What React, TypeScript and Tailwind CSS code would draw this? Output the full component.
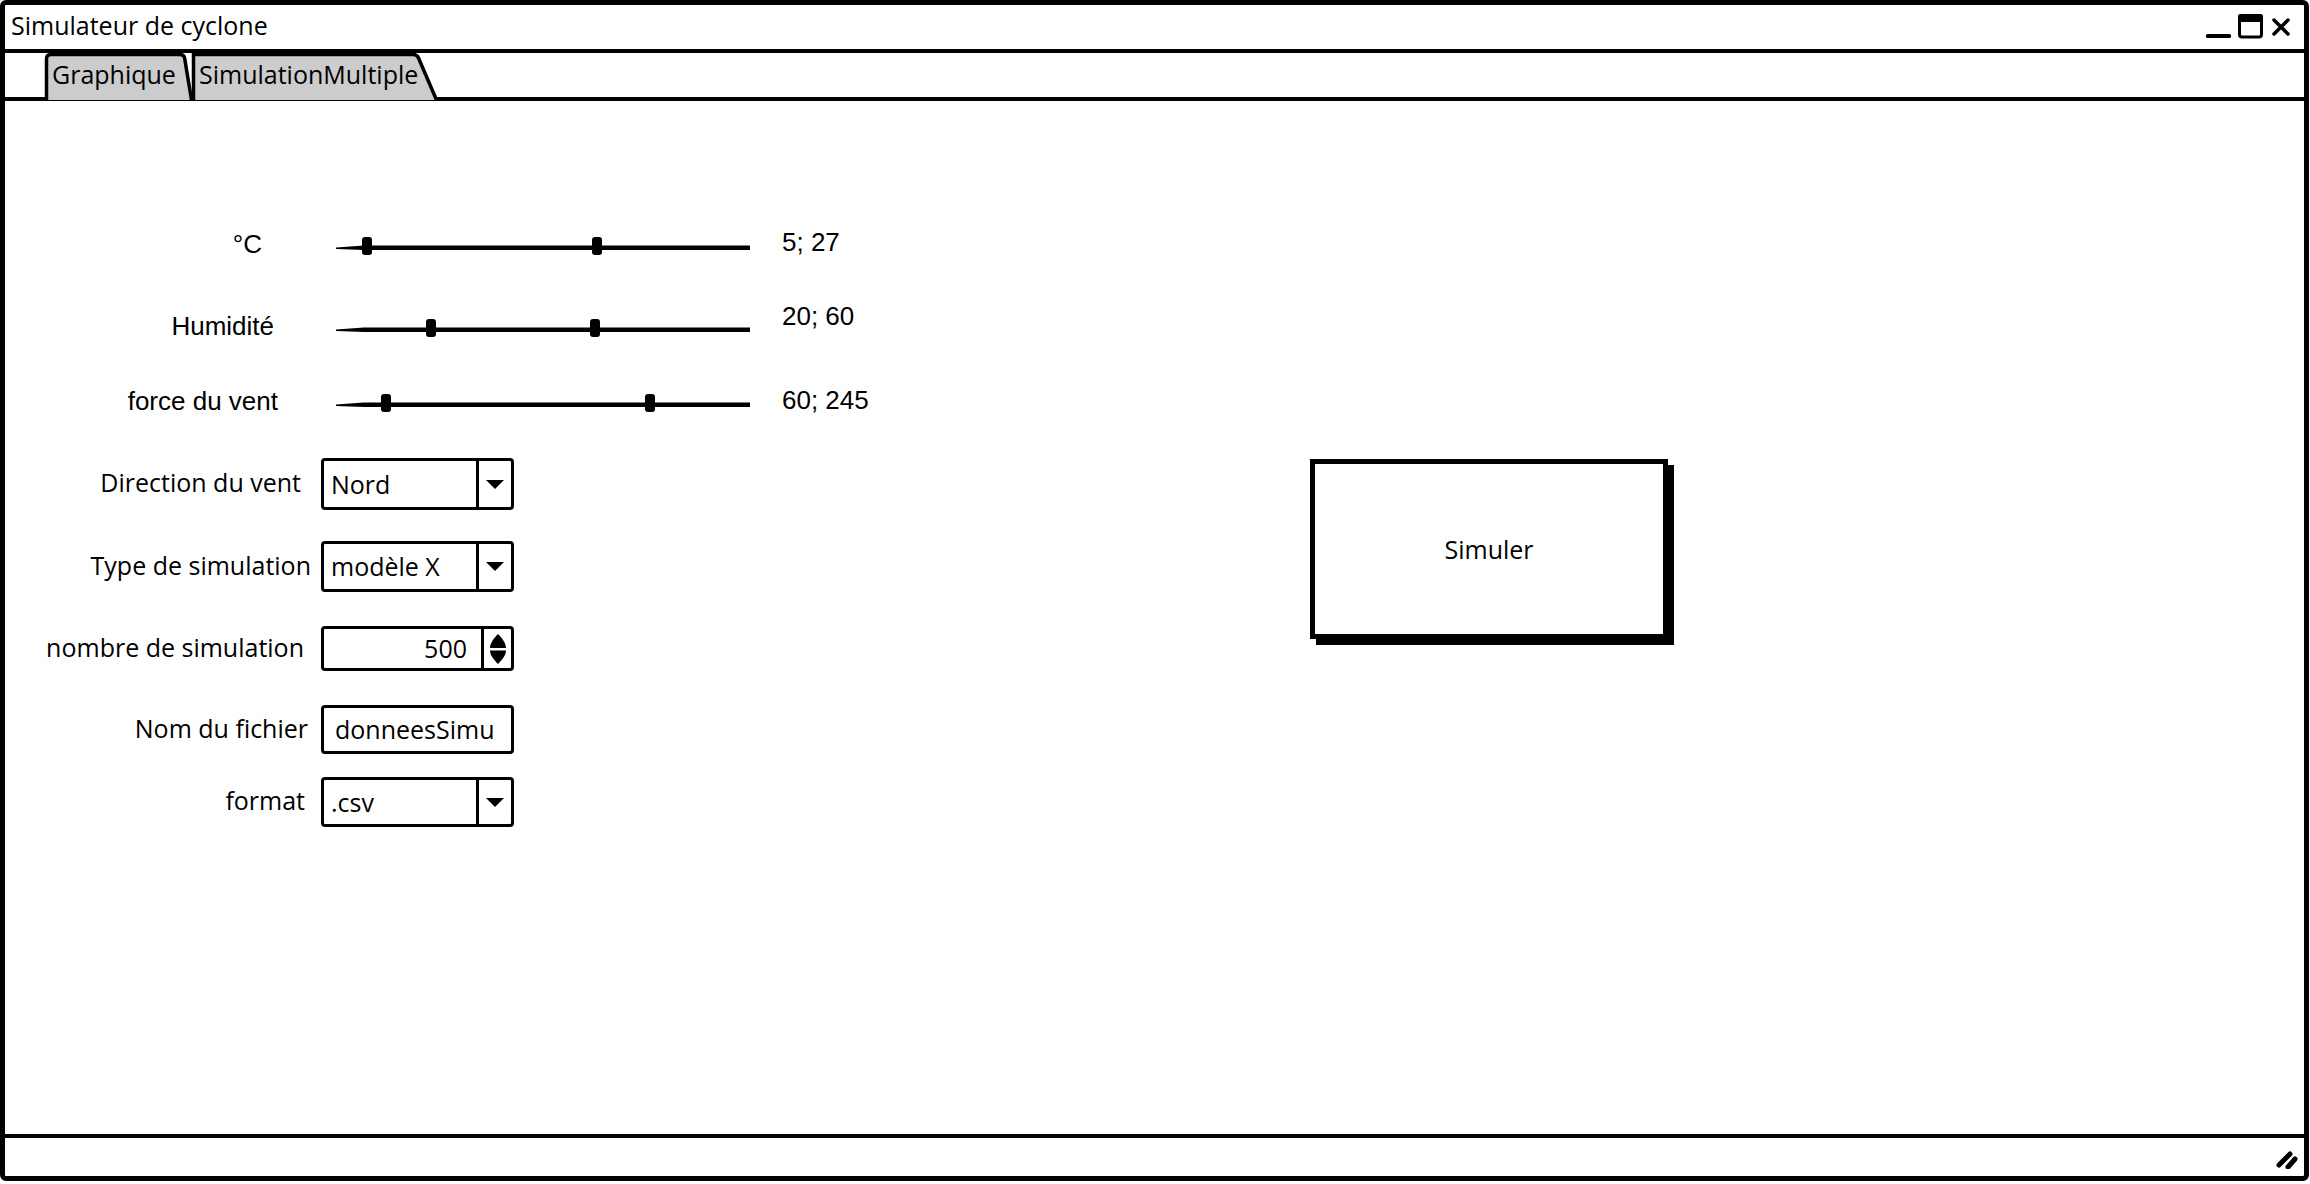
import React from "react";

const BF = { fontFamily: '"Open Sans", "Noto Sans", sans-serif', fontWeight: 500 };
const AF = { fontFamily: '"Liberation Sans", Arial, sans-serif' };

function Slider({ a, b }: { a: number; b: number }) {
  return (
    <svg width="414" height="26" className="block shrink-0">
      <polygon points="0,14.5 28,12.5 414,12.5 414,17 28,17 0,16" fill="#000" />
      <rect x={a - 5} y={4} width={10} height={18} rx={3} fill="#000" />
      <rect x={b - 5} y={4} width={10} height={18} rx={3} fill="#000" />
    </svg>
  );
}

function SliderRow({
  label,
  pr,
  a,
  b,
  value,
  valueShift,
  mt,
}: {
  label: string;
  pr: string;
  a: number;
  b: number;
  value: string;
  valueShift: string;
  mt: string;
}) {
  return (
    <div className={`flex items-center h-[40px] ${mt}`}>
      <div className={`w-[331px] text-right text-[26px] leading-none mb-[5px] ${pr}`} style={AF}>
        {label}
      </div>
      <Slider a={a} b={b} />
      <div className={`ml-[32px] text-[26px] leading-none ${valueShift}`} style={AF}>
        {value}
      </div>
    </div>
  );
}

function Arrow() {
  return (
    <svg width="18" height="9" className="block">
      <polygon points="0,0 18,0 9,9" fill="#000" />
    </svg>
  );
}

function Combo({ text, h }: { text: string; h: string }) {
  return (
    <div className={`w-[193px] ${h} border-[3.5px] border-black rounded-[4px] flex bg-white`}>
      <div className="flex-1 flex items-center pl-[7px] text-[25px] leading-none" style={BF}>
        {text}
      </div>
      <div className="w-[35px] border-l-[3px] border-black flex items-center justify-center">
        <Arrow />
      </div>
    </div>
  );
}

function FormRow({
  label,
  pr,
  mt,
  children,
}: {
  label: string;
  pr: string;
  mt: string;
  children: React.ReactNode;
}) {
  return (
    <div className={`flex items-center ${mt}`}>
      <div className={`w-[316px] text-right text-[25px] leading-none mb-[3px] ${pr}`} style={BF}>
        {label}
      </div>
      {children}
    </div>
  );
}

export default function App() {
  return (
    <div className="w-[2310px] h-[1184px] bg-white text-black">
      <div className="w-[2309px] h-[1181px] border-[5px] border-black rounded-[6px] flex flex-col overflow-hidden">
        {/* Title bar */}
        <div className="h-[48px] shrink-0 border-b-[4px] border-black flex items-center justify-between pl-[6px] pr-[14px]">
          <div className="text-[25px] leading-none mb-[3px]" style={BF}>
            Simulateur de cyclone
          </div>
          <svg width="84" height="26" className="block mb-[1px]">
            <rect x="0" y="20" width="25" height="4" rx="1.5" fill="#000" />
            <rect x="33.5" y="1.5" width="22" height="21.5" rx="2.5" fill="none" stroke="#000" strokeWidth="3" />
            <rect x="32" y="0" width="25" height="8" rx="2.5" fill="#000" />
            <path d="M68 6 L82 20 M82 6 L68 20" stroke="#000" strokeWidth="3.5" strokeLinecap="round" />
          </svg>
        </div>

        {/* Tab bar */}
        <div className="h-[48px] shrink-0 border-b-[4px] border-black flex pl-[40px]">
          <div className="relative w-[147px] h-full flex items-center pl-[7px]">
            <svg width="147" height="46" className="absolute left-0 top-0 overflow-visible">
              <path
                d="M1.5,47 L1.5,6 Q1.5,1.5 6,1.5 L135,1.5 Q138.5,1.5 139.5,4.5 L146.5,47"
                fill="#cccccc"
                stroke="#000"
                strokeWidth="3.5"
              />
            </svg>
            <span className="relative text-[25px] leading-none mb-[2px]" style={BF}>
              Graphique
            </span>
          </div>
          <div className="relative w-[245px] h-full flex items-center pl-[7px]">
            <svg width="245" height="46" className="absolute left-0 top-0 overflow-visible">
              <path
                d="M1.5,47 L1.5,1.5 L221,1.5 Q225,1.5 226.5,5 L244.5,47"
                fill="#cccccc"
                stroke="#000"
                strokeWidth="3.5"
              />
            </svg>
            <span className="relative text-[25px] leading-none mb-[2px]" style={BF}>
              SimulationMultiple
            </span>
          </div>
        </div>

        {/* Content */}
        <div className="flex-1 flex">
          <div className="w-[1305px] shrink-0 flex flex-col pt-[125px]">
            <SliderRow label="°C" pr="pr-[74px]" a={31} b={261} value="5; 27" valueShift="mb-[8px]" mt="" />
            <SliderRow label="Humidité" pr="pr-[62px]" a={95} b={259} value="20; 60" valueShift="mb-[24px]" mt="mt-[42px]" />
            <SliderRow label="force du vent" pr="pr-[58px]" a={50} b={314} value="60; 245" valueShift="mb-[6px]" mt="mt-[35px]" />

            <FormRow label="Direction du vent" pr="pr-[20px]" mt="mt-[35px]">
              <Combo text="Nord" h="h-[52px]" />
            </FormRow>
            <FormRow label="Type de simulation" pr="pr-[10px]" mt="mt-[31px]">
              <Combo text="modèle X" h="h-[51px]" />
            </FormRow>
            <FormRow label="nombre de simulation" pr="pr-[17px]" mt="mt-[34px]">
              <div className="w-[193px] h-[45px] border-[3.5px] border-black rounded-[4px] flex bg-white">
                <div className="flex-1 flex items-center justify-end pr-[14px] text-[25px] leading-none" style={BF}>
                  500
                </div>
                <div className="w-[30px] border-l-[3px] border-black flex items-center justify-center">
                  <svg width="18" height="32" className="block">
                    <path d="M9,1 C5,5 1,10 1,15 L17,15 C17,10 13,5 9,1 Z" fill="#000" />
                    <path d="M1,17.5 L17,17.5 C17,22 13,27 9,31 C5,27 1,22 1,17.5 Z" fill="#000" />
                  </svg>
                </div>
              </div>
            </FormRow>
            <FormRow label="Nom du fichier" pr="pr-[13px]" mt="mt-[34px]">
              <div className="w-[193px] h-[49px] border-[3.5px] border-black rounded-[4px] flex items-center pl-[11px] bg-white">
                <span className="text-[25px] leading-none" style={BF}>
                  donneesSimu
                </span>
              </div>
            </FormRow>
            <FormRow label="format" pr="pr-[16px]" mt="mt-[23px]">
              <Combo text=".csv" h="h-[50px]" />
            </FormRow>
          </div>

          <div className="pt-[358px]">
            <button
              className="w-[358px] h-[180px] border-[5px] border-black bg-white shadow-[6px_6px_0_0_#000] flex items-center justify-center text-[25px] leading-none"
              style={BF}
            >
              Simuler
            </button>
          </div>
        </div>

        {/* Status bar */}
        <div className="h-[42px] shrink-0 border-t-[4px] border-black flex items-center justify-end pr-[6px]">
          <svg width="22" height="20" className="block mt-[4px]">
            <path d="M3 16 L14 5" stroke="#000" strokeWidth="5" strokeLinecap="round" />
            <path d="M12 18 L19 10" stroke="#000" strokeWidth="5" strokeLinecap="round" />
          </svg>
        </div>
      </div>
    </div>
  );
}
